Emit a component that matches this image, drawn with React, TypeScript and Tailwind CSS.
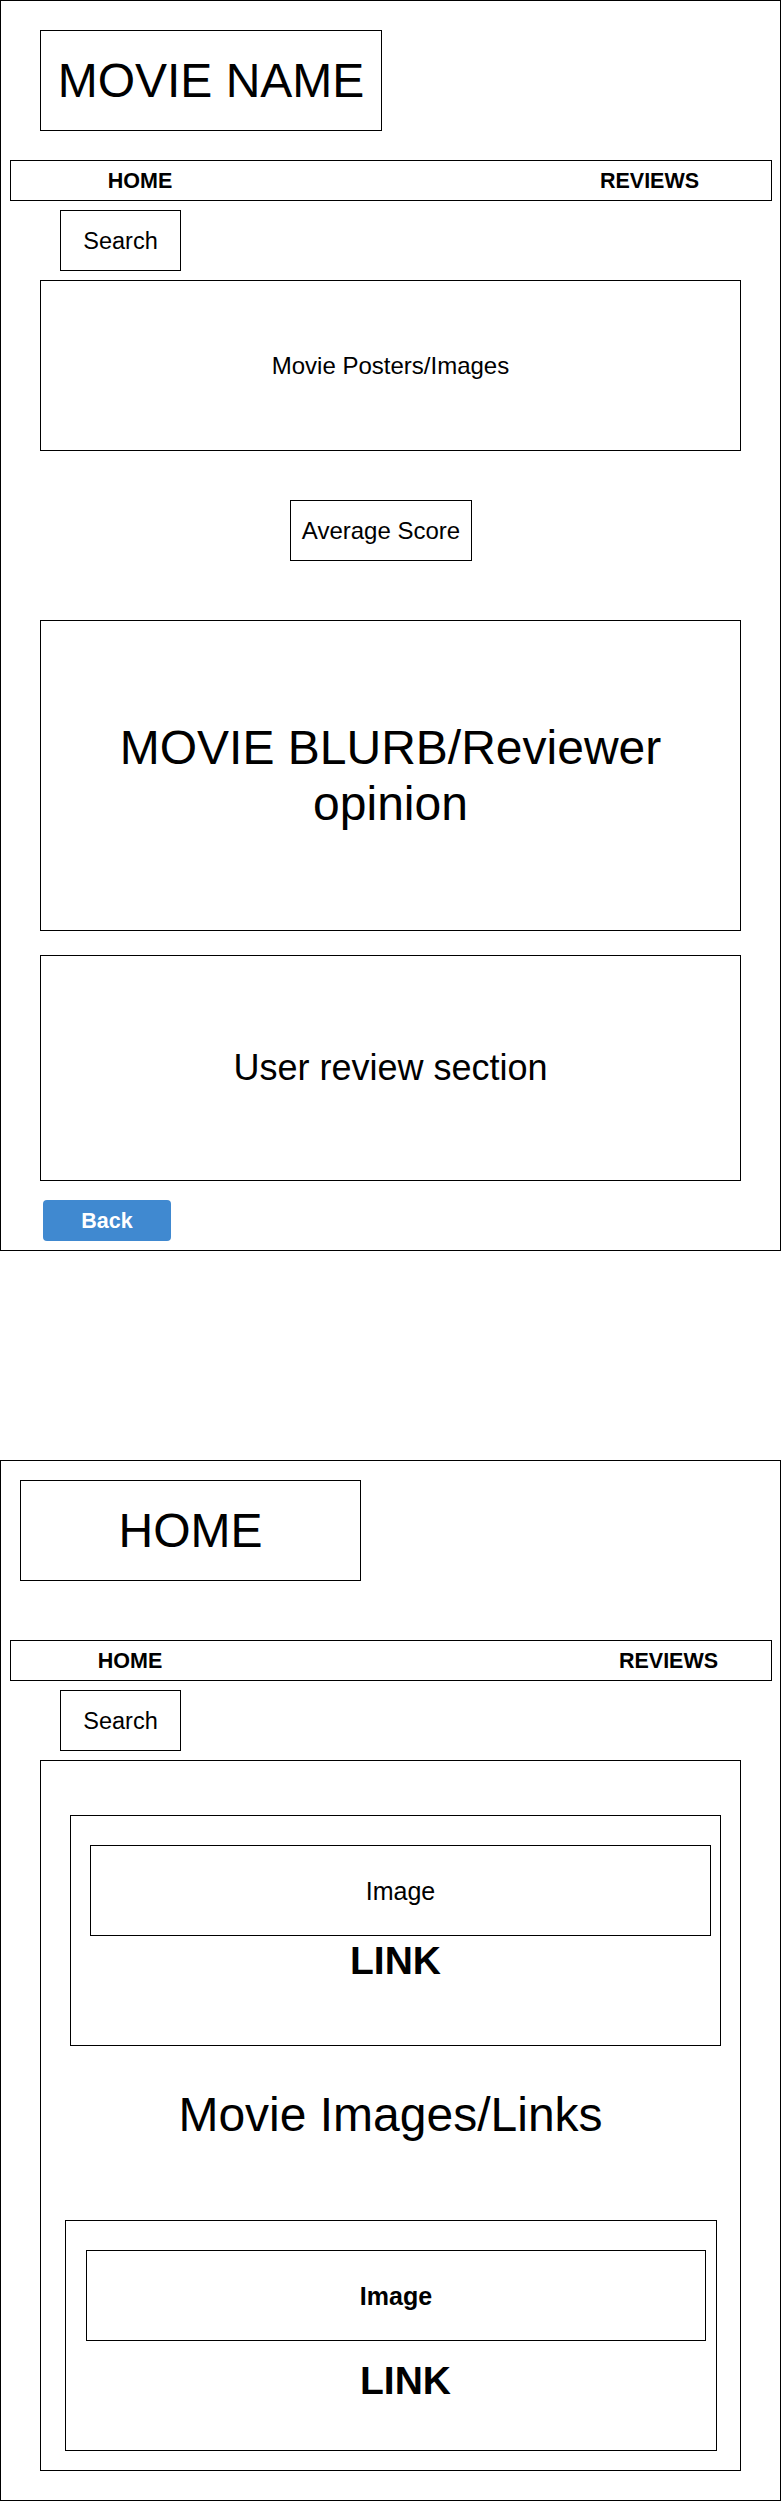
import React from "react";

const box = "border border-black box-border";

function Nav({ homeMl, reviewsMl }: { homeMl: string; reviewsMl: string }) {
  return (
    <div className={`${box} ml-[9px] w-[762px] h-[41px] flex items-center`}>
      <div className={`${homeMl} w-[100px] text-center font-bold text-[21.5px] leading-[26px]`}>HOME</div>
      <div className={`${reviewsMl} w-[140px] text-center font-bold text-[21.5px] leading-[26px]`}>REVIEWS</div>
    </div>
  );
}

function SearchBox() {
  return (
    <div className={`${box} mt-[9px] ml-[59px] w-[121px] h-[61px] flex items-center justify-center text-[23.5px] leading-[28px]`}>
      Search
    </div>
  );
}

export default function App() {
  return (
    <div className="w-[781px] bg-white text-black font-['Liberation_Sans',Arial,sans-serif] flex flex-col">
      {/* Frame 1: movie page */}
      <div className="border border-black box-border w-[781px] h-[1251px] flex flex-col">
        <div className={`${box} mt-[29px] ml-[39px] w-[342px] h-[101px] flex items-center justify-center text-[48px] leading-[56px]`}>
          MOVIE NAME
        </div>
        <div className="mt-[29px]">
          <Nav homeMl="ml-[79px]" reviewsMl="ml-[389.5px]" />
        </div>
        <SearchBox />
        <div className={`${box} mt-[9px] ml-[39px] w-[701px] h-[171px] flex items-center justify-center text-[24px] leading-[28px]`}>
          Movie Posters/Images
        </div>
        <div className={`${box} mt-[49px] ml-[289px] w-[182px] h-[61px] flex items-center justify-center text-[24px] leading-[28px]`}>
          Average Score
        </div>
        <div className={`${box} mt-[59px] ml-[39px] w-[701px] h-[311px] flex items-center justify-center text-center text-[48px] leading-[56px]`}>
          <div>
            MOVIE BLURB/Reviewer
            <br />
            opinion
          </div>
        </div>
        <div className={`${box} mt-[24px] ml-[39px] w-[701px] h-[226px] flex items-center justify-center text-[36px] leading-[42px]`}>
          User review section
        </div>
        <button className="mt-[19px] ml-[42px] w-[128px] h-[41px] rounded-[4px] bg-[#4089d0] text-white font-bold text-[21.5px] leading-[26px] flex items-center justify-center">
          Back
        </button>
      </div>

      {/* Frame 2: home page */}
      <div className="mt-[209px] border border-black box-border w-[781px] h-[1041px] flex flex-col">
        <div className={`${box} mt-[19px] ml-[19px] w-[341px] h-[101px] flex items-center justify-center text-[48px] leading-[56px]`}>
          HOME
        </div>
        <div className="mt-[59px]">
          <Nav homeMl="ml-[69px]" reviewsMl="ml-[418.5px]" />
        </div>
        <SearchBox />
        <div className={`${box} mt-[9px] ml-[39px] w-[701px] h-[711px] flex flex-col`}>
          <div className={`${box} mt-[54px] ml-[29px] w-[651px] h-[231px] flex flex-col`}>
            <div className={`${box} mt-[29px] ml-[19px] w-[621px] h-[91px] flex items-center justify-center text-[25px] leading-[30px]`}>
              Image
            </div>
            <div className="mt-[5px] text-center font-bold text-[39px] leading-[40px]">LINK</div>
          </div>
          <div className="mt-[41px] h-[56px] text-center text-[48px] leading-[56px]">Movie Images/Links</div>
          <div className={`${box} mt-[77px] ml-[24px] w-[652px] h-[231px] flex flex-col`}>
            <div className={`${box} mt-[29px] ml-[20px] w-[620px] h-[91px] flex items-center justify-center font-bold text-[25px] leading-[30px]`}>
              Image
            </div>
            <div className="mt-[20px] pl-[29px] text-center font-bold text-[39px] leading-[40px]">LINK</div>
          </div>
        </div>
      </div>
    </div>
  );
}
